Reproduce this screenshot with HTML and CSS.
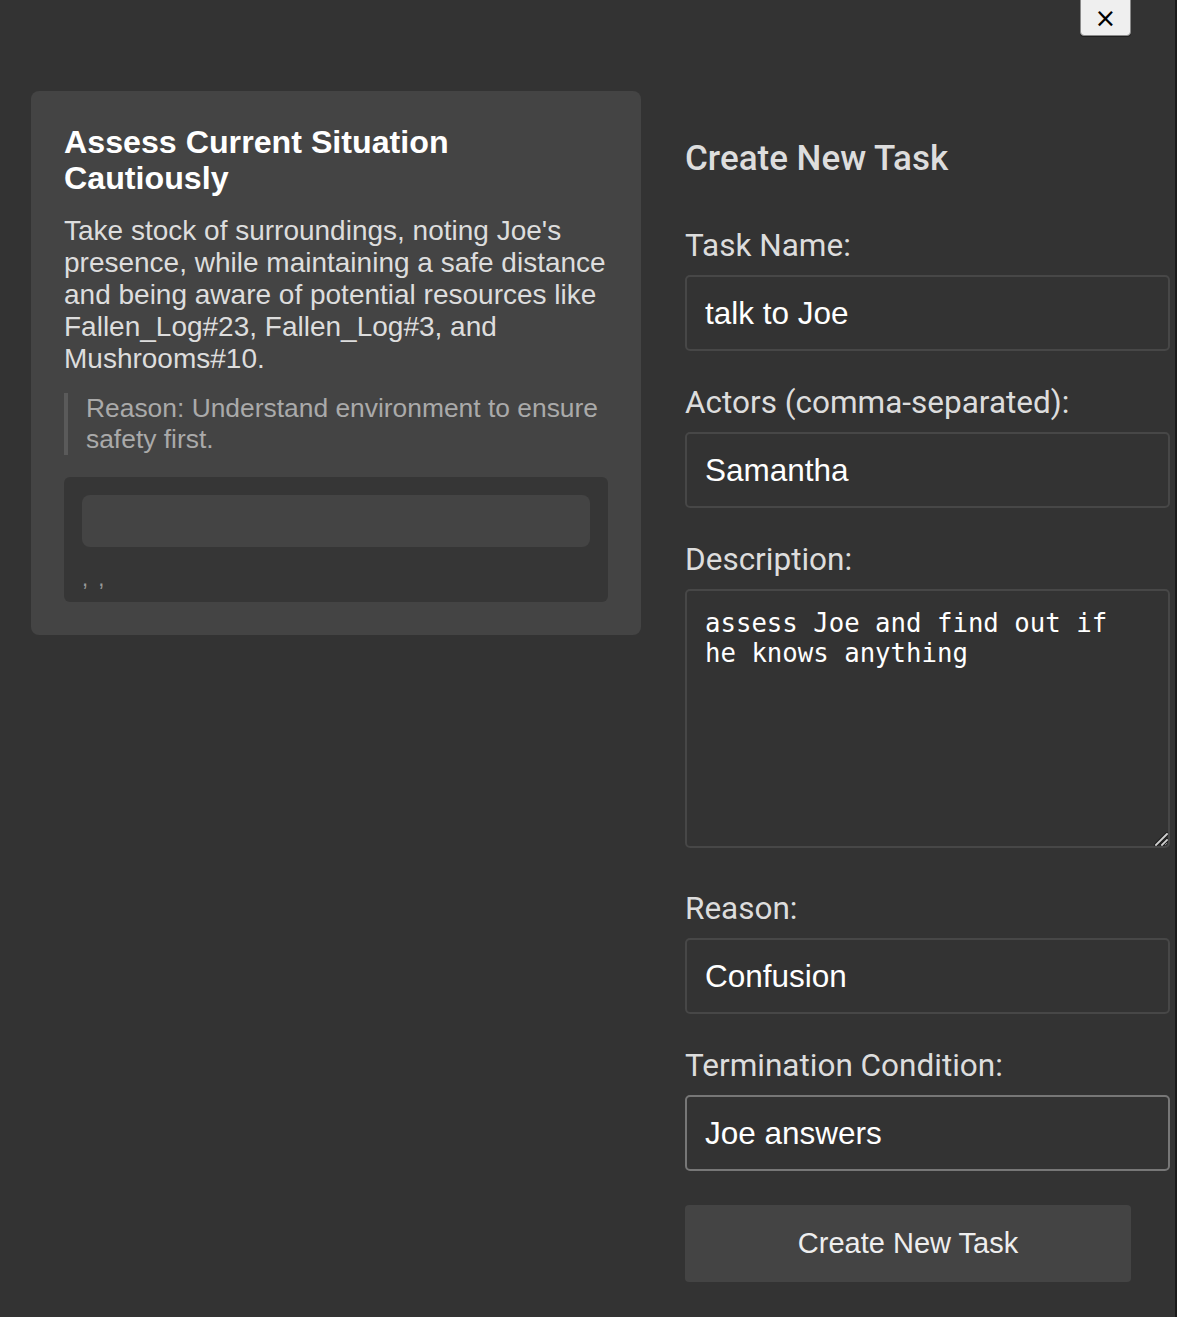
FILE: index.html
```html
<!DOCTYPE html>
<html lang="en">
<head>
<meta charset="utf-8">
<title>Create New Task</title>
<link rel="stylesheet" href="styles.css">
</head>
<body>
<div class="modal">
  <button class="close-btn" type="button" aria-label="Close">×</button>
  <div class="layout">
    <section class="task-card">
      <h3 class="task-title">Assess Current Situation Cautiously</h3>
      <p class="task-desc">Take stock of surroundings, noting Joe's presence, while maintaining a safe distance and being aware of potential resources like Fallen_Log#23, Fallen_Log#3, and Mushrooms#10.</p>
      <blockquote class="task-reason">Reason: Understand environment to ensure safety first.</blockquote>
      <div class="task-extra">
        <div class="task-extra-bar"></div>
        <div class="task-extra-meta">, ,</div>
      </div>
    </section>
    <form class="task-form">
      <h2 class="form-title">Create New Task</h2>
      <label class="field-label" for="name">Task Name:</label>
      <input class="field-input" id="name" type="text" value="talk to Joe">
      <label class="field-label" for="actors">Actors (comma-separated):</label>
      <input class="field-input" id="actors" type="text" value="Samantha">
      <label class="field-label" for="desc">Description:</label>
      <div class="textarea-wrap">
        <textarea class="field-textarea" id="desc">assess Joe and find out if he knows anything</textarea>
        <svg class="resize-grip" width="14" height="14" viewBox="0 0 14 14" aria-hidden="true">
          <path d="M2 13 L13 2 M8 13 L13 8" stroke="#1e1e1e" stroke-width="4" stroke-linecap="square" fill="none"/>
          <path d="M2 13 L13 2 M8 13 L13 8" stroke="#cfcfcf" stroke-width="1.8" stroke-linecap="square" fill="none"/>
        </svg>
      </div>
      <label class="field-label" for="reason">Reason:</label>
      <input class="field-input" id="reason" type="text" value="Confusion">
      <label class="field-label" for="term">Termination Condition:</label>
      <input class="field-input field-focused" id="term" type="text" value="Joe answers" autofocus>
      <button class="submit-btn" type="button">Create New Task</button>
    </form>
  </div>
</div>
<script src="script.js"></script>
</body>
</html>
```

FILE: styles.css
```css
* { box-sizing: border-box; }

html, body {
  margin: 0;
  padding: 0;
  background: #1b1b1b;
}

body {
  width: 1177px;
  height: 1317px;
  overflow: hidden;
  font-family: "Liberation Sans", Arial, sans-serif;
}

.modal {
  position: relative;
  width: 1175px;
  height: 1317px;
  background: #333333;
  padding: 91px 5px 0 31px;
}

.close-btn {
  position: absolute;
  top: -6px;
  left: 1080px;
  width: 51px;
  height: 42px;
  padding: 6px 0 0;
  background: #efefef;
  border: 1px solid #8a8a8a;
  border-radius: 0 0 4px 4px;
  box-shadow: 0 1px 0 #1f1f1f;
  color: #000;
  font-family: "DejaVu Sans", sans-serif;
  font-size: 26px;
  line-height: 30px;
}

.layout {
  display: grid;
  grid-template-columns: 610px 1fr;
  column-gap: 44px;
  align-items: start;
}

.task-card {
  background: #444444;
  border-radius: 8px;
  padding: 33px;
  color: #dddddd;
}

.task-title {
  margin: 0 0 19px;
  font-size: 32.2px;
  line-height: 36px;
  font-weight: 700;
  color: #ffffff;
}

.task-desc {
  margin: 0 0 18px;
  font-size: 28px;
  line-height: 32px;
  color: #dddddd;
}

.task-reason {
  margin: 0 0 22px;
  padding: 0 0 0 18px;
  border-left: 4px solid #5a5a5a;
  font-size: 26.4px;
  line-height: 31px;
  color: #aaaaaa;
}

.task-extra {
  background: #363636;
  border-radius: 6px;
  padding: 18px 18px 12px;
}

.task-extra-bar {
  height: 52px;
  background: #444444;
  border-radius: 8px;
}

.task-extra-meta {
  margin-top: 21px;
  font-size: 22px;
  line-height: 22px;
  letter-spacing: 2px;
  color: #999999;
}

.task-form {
  display: flex;
  flex-direction: column;
  align-items: flex-start;
  padding-top: 47px;
}

.form-title {
  margin: 0 0 48px;
  font-family: Roboto, "Liberation Sans", sans-serif;
  font-size: 35px;
  line-height: 42px;
  font-weight: 500;
  color: #dddddd;
}

.field-label {
  display: block;
  margin-bottom: 12px;
  font-family: Roboto, "Liberation Sans", sans-serif;
  font-size: 31.5px;
  line-height: 35px;
  color: #dddddd;
}

.field-input,
.field-textarea {
  width: 485px;
  margin: 0 0 34px;
  background: #333333;
  border: 2px solid #474747;
  border-radius: 5px;
  color: #ffffff;
  caret-color: #ffffff;
  outline: none;
}

.field-input {
  height: 76px;
  padding: 0 18px;
  font-family: "Liberation Sans", Arial, sans-serif;
  font-size: 31.5px;
}

.field-focused {
  border-color: #777777;
}

.textarea-wrap {
  position: relative;
  width: 485px;
  margin-bottom: 43px;
}

.field-textarea {
  display: block;
  height: 259px;
  margin: 0;
  padding: 17px 18px 16px;
  font-family: "DejaVu Sans Mono", monospace;
  font-size: 25.7px;
  line-height: 30px;
  resize: vertical;
}

.resize-grip {
  position: absolute;
  right: 2px;
  bottom: 2px;
  pointer-events: none;
}

.submit-btn {
  width: 446px;
  height: 77px;
  margin-top: 0;
  background: #444444;
  border: none;
  border-radius: 4px;
  color: #eeeeee;
  font-family: "Liberation Sans", Arial, sans-serif;
  font-size: 29px;
}
```

FILE: script.js
```js
var term = document.getElementById('term');
term.focus();
term.setSelectionRange(term.value.length, term.value.length);
```
